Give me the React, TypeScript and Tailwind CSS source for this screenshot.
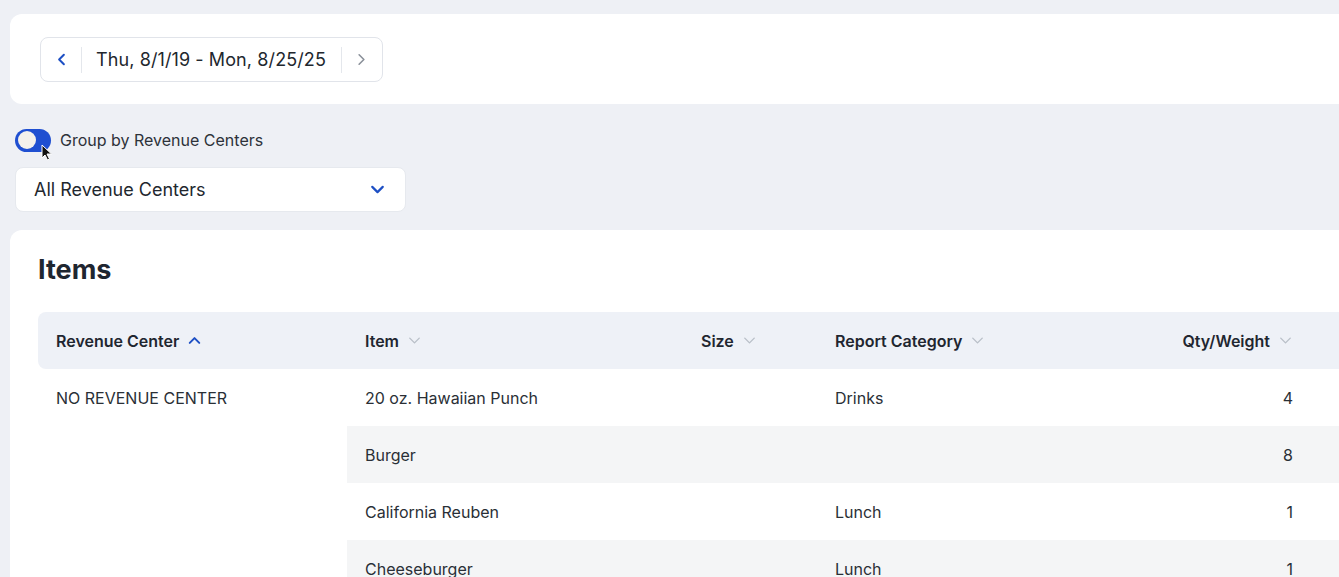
import { ChevronDown, ChevronLeft, ChevronRight, ChevronUp } from 'lucide-react';

interface Row {
  item: string;
  size: string;
  category: string;
  qty: string;
}

const rows: Row[] = [
  { item: '20 oz. Hawaiian Punch', size: '', category: 'Drinks', qty: '4' },
  { item: 'Burger', size: '', category: '', qty: '8' },
  { item: 'California Reuben', size: '', category: 'Lunch', qty: '1' },
  { item: 'Cheeseburger', size: '', category: 'Lunch', qty: '1' },
];

const font = { fontFamily: 'Inter, "Noto Sans", sans-serif' };

function SortHead({ label, active, className = '' }: { label: string; active?: boolean; className?: string }) {
  return (
    <div className={`flex items-center gap-1.5 text-[16px] font-semibold text-[#1f2630] ${className}`}>
      <span>{label}</span>
      {active ? (
        <ChevronUp className="w-[19px] h-[19px] text-[#1d4fc4]" strokeWidth={2.5} />
      ) : (
        <ChevronDown className="w-[19px] h-[19px] text-[#b9bfc8]" strokeWidth={1.75} />
      )}
    </div>
  );
}

export default function App() {
  return (
    <div className="w-full h-[577px] overflow-hidden bg-[#eef0f5]" style={font}>
      <div className="w-[1380px] pl-[10px] pt-[14px]">
        {/* date range */}
        <div className="bg-white rounded-xl h-[90px] pl-[30px] pt-[23px]">
          <div className="inline-flex items-center h-[45px] border border-[#e1e4ea] rounded-lg">
            <button className="w-[40px] h-full flex items-center justify-center text-[#1d4fc4]">
              <ChevronLeft className="w-[19px] h-[19px]" strokeWidth={2.5} />
            </button>
            <div className="w-px h-[26px] bg-[#e4e7ec]" />
            <span className="pl-[14px] pr-[15px] text-[18px] tracking-[0.1px] text-[#22272e]">Thu, 8/1/19 - Mon, 8/25/25</span>
            <div className="w-px h-[26px] bg-[#e4e7ec]" />
            <button className="w-[40px] h-full flex items-center justify-center text-[#8a9099]">
              <ChevronRight className="w-[19px] h-[19px]" strokeWidth={2} />
            </button>
          </div>
        </div>

        {/* group toggle */}
        <div className="relative flex items-center gap-[9px] pl-[5px] mt-[24px] h-[24px]">
          <div className="w-[36px] h-[23px] rounded-full bg-[#1f4fd1] flex items-center px-[3px]">
            <div className="w-[18px] h-[18px] rounded-full bg-[#f4f1ec]" />
          </div>
          <span className="text-[16px] text-[#2d323a]">Group by Revenue Centers</span>
          <svg className="absolute left-[31px] top-[16px]" width="12" height="17" viewBox="0 0 12 17">
            <path d="M1 1 L1 14 L4 11 L6.5 16 L8.5 15 L6 10 L10.5 10 Z" fill="#111" stroke="#fff" strokeWidth="1" />
          </svg>
        </div>

        {/* revenue center select */}
        <div className="mt-[15px] ml-[5px] w-[391px] h-[45px] bg-white rounded-lg border border-[#e6e9ee] flex items-center justify-between pl-[18px] pr-[17px]">
          <span className="text-[18px] text-[#22272e]">All Revenue Centers</span>
          <ChevronDown className="w-[21px] h-[21px] text-[#1d4fc4]" strokeWidth={2.5} />
        </div>

        {/* items table */}
        <div className="mt-[18px] bg-white rounded-xl pl-[28px] pt-[24px] pb-10">
          <h2 className="text-[27px] font-bold text-[#1f2630] leading-8">Items</h2>

          <div className="mt-[26px]">
            <div className="flex h-[57px] items-center bg-[#eef1f7] rounded-l-lg">
              <SortHead label="Revenue Center" active className="w-[309px] pl-[18px]" />
              <SortHead label="Item" className="w-[336px] pl-[18px]" />
              <SortHead label="Size" className="w-[134px] pl-[18px]" />
              <SortHead label="Report Category" className="w-[260px] pl-[18px]" />
              <SortHead label="Qty/Weight" className="w-[234px] justify-end pr-[16px]" />
            </div>

            <div className="flex">
              <div className="w-[309px] pl-[18px] h-[57px] flex items-center text-[16px] text-[#2a2f36]">
                NO REVENUE CENTER
              </div>
              <div className="flex-1">
                {rows.map((row, i) => (
                  <div
                    key={row.item}
                    className={`flex h-[57px] items-center text-[16px] text-[#2a2f36] ${i % 2 === 1 ? 'bg-[#f4f5f6]' : ''}`}
                  >
                    <div className="w-[336px] pl-[18px]">{row.item}</div>
                    <div className="w-[134px] pl-[18px]">{row.size}</div>
                    <div className="w-[260px] pl-[18px]">{row.category}</div>
                    <div className="w-[234px] text-right pr-[18px]">{row.qty}</div>
                  </div>
                ))}
              </div>
            </div>
          </div>
        </div>
      </div>
    </div>
  );
}
